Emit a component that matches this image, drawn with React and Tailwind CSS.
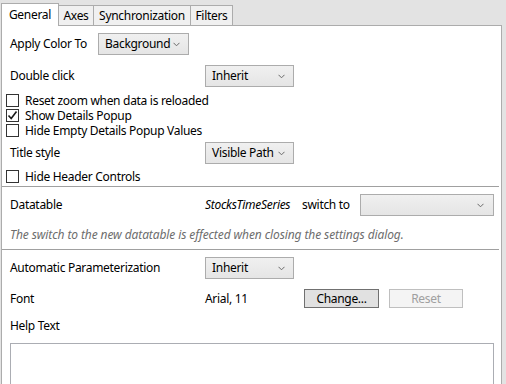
import React from "react";

const Chevron = () => (
    <svg width="7" height="5" viewBox="0 0 7 5" className="shrink-0">
        <path d="M0.5 0.8 L3.5 3.8 L6.5 0.8" fill="none" stroke="#6a6a6a" strokeWidth="1" />
    </svg>
);

const Dropdown = ({ value, width }) => (
    <div
        className={`h-[22px] ${width} flex items-center justify-between pl-[6px] pr-[8px] border border-[#acacac] bg-gradient-to-b from-[#f0f0f0] to-[#e5e5e5]`}
    >
        <span className="whitespace-nowrap">{value}</span>
        <Chevron />
    </div>
);

const CheckRow = ({ label, checked }) => (
    <div className="h-[15px] flex items-center pl-[4px]">
        <div className="w-[13px] h-[13px] border border-[#333333] bg-white flex items-center justify-center shrink-0">
            {checked && (
                <svg width="11" height="11" viewBox="0 0 11 11">
                    <path d="M1.5 5.5 L4.2 8.5 L9.5 1.5" fill="none" stroke="#1a1a1a" strokeWidth="1.6" />
                </svg>
            )}
        </div>
        <span className="ml-[6px] whitespace-nowrap leading-[13px]">{label}</span>
    </div>
);

const Tab = ({ label, active, width, first }) => (
    <div
        className={`${width} flex items-center justify-center border-t border-r border-[#acacac] ${first ? "border-l" : ""} ${
            active ? "h-[23px] -mb-px bg-white relative z-10" : "h-[20px] bg-[#f0f0f0]"
        }`}
    >
        {label}
    </div>
);

export default function App() {
    return (
        <div className="w-[506px] h-[384px] overflow-hidden bg-[#e3e3e3] text-[12px] leading-[16px] tracking-[-0.3px] text-black font-['Segoe_UI','Noto_Sans',sans-serif] flex flex-col">
            <div className="h-[25px] flex items-end pl-[1px] shrink-0">
                <Tab label="General" active first width="w-[58px]" />
                <Tab label="Axes" width="w-[35px]" />
                <Tab label="Synchronization" width="w-[97px]" />
                <Tab label="Filters" width="w-[42px]" />
            </div>

            <div className="ml-[1px] w-[501px] flex-1 border border-[#acacac] bg-white flex flex-col">
                <div className="mt-[7px] h-[22px] flex items-center pl-[8px]">
                    <span className="w-[88px]">Apply Color To</span>
                    <Dropdown value="Background" width="w-[91px]" />
                </div>

                <div className="mt-[10px] h-[22px] flex items-center pl-[8px]">
                    <span className="w-[195px]">Double click</span>
                    <Dropdown value="Inherit" width="w-[89px]" />
                </div>

                <div className="mt-[6px] flex flex-col">
                    <CheckRow label="Reset zoom when data is reloaded" />
                    <CheckRow label="Show Details Popup" checked />
                    <CheckRow label="Hide Empty Details Popup Values" />
                </div>

                <div className="mt-[4px] h-[22px] flex items-center pl-[8px]">
                    <span className="w-[195px]">Title style</span>
                    <Dropdown value="Visible Path" width="w-[89px]" />
                </div>

                <div className="mt-[5px]">
                    <CheckRow label="Hide Header Controls" />
                </div>

                <div className="mt-[2px] mr-[2px] h-px bg-[#a0a0a0]" />

                <div className="mt-[7px] h-[22px] flex items-center pl-[8px]">
                    <span className="w-[195px]">Datatable</span>
                    <span className="w-[97px] italic">StocksTimeSeries</span>
                    <span className="w-[58px]">switch to</span>
                    <div className="w-[134px] h-[22px] flex items-center justify-end pr-[9px] border border-[#acacac] bg-gradient-to-b from-[#f0f0f0] to-[#e5e5e5]">
                        <Chevron />
                    </div>
                </div>

                <div className="mt-[11px] h-[16px] pl-[8px] italic text-[#6d6d6d] tracking-[-0.1px]">
                    The switch to the new datatable is effected when closing the settings dialog.
                </div>

                <div className="mt-[6px] mr-[2px] h-px bg-[#a0a0a0]" />

                <div className="mt-[7px] h-[22px] flex items-center pl-[8px]">
                    <span className="w-[195px]">Automatic Parameterization</span>
                    <Dropdown value="Inherit" width="w-[89px]" />
                </div>

                <div className="mt-[10px] h-[19px] flex items-center pl-[8px]">
                    <span className="w-[195px]">Font</span>
                    <span className="w-[99px]">Arial, 11</span>
                    <div className="w-[75px] h-[19px] flex items-center justify-center border border-[#707070] bg-[#e1e1e1]">
                        Change...
                    </div>
                    <div className="ml-[10px] w-[74px] h-[19px] flex items-center justify-center border border-[#bfbfbf] bg-[#f4f4f4] text-[#a0a0a0]">
                        Reset
                    </div>
                </div>

                <div className="mt-[10px] h-[16px] pl-[8px]">Help Text</div>

                <div className="mt-[9px] ml-[8px] w-[484px] h-[80px] shrink-0 border border-[#abadb3] bg-white" />
            </div>
        </div>
    );
}
